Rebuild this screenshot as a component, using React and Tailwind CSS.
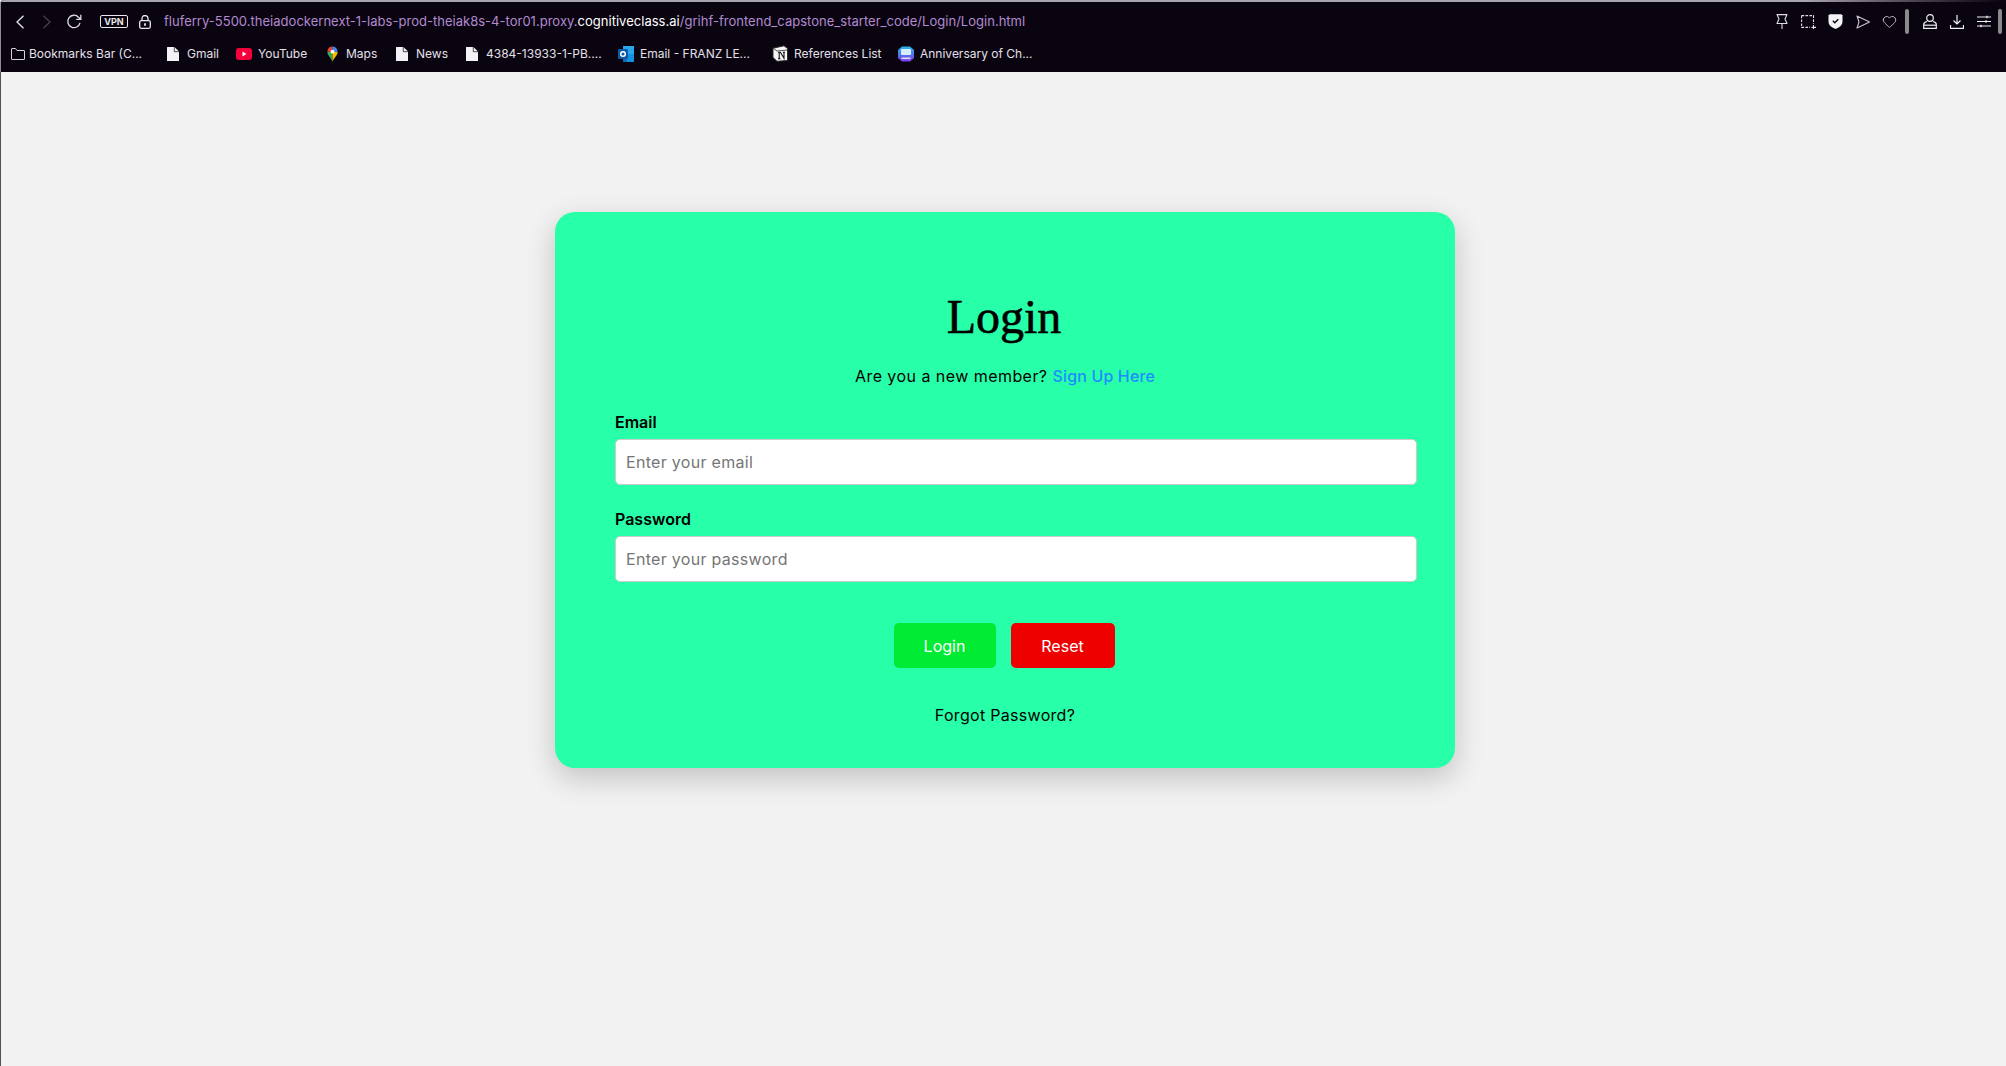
import React from 'react';
import { Heart } from 'lucide-react';

const uiFont = "font-['Inter','Liberation_Sans',sans-serif]";

const PageIcon = () => (
    <svg width="12" height="14" viewBox="0 0 12 14">
        <path d="M0 .5A.5.5 0 0 1 .5 0H7.500L12 4.500V13.500A.5.5 0 0 1 11.500 14H.5A.5.5 0 0 1 0 13.500z" fill="#f4f2f6" />
        <path d="M7.300 0V4.700H12" fill="none" stroke="#0a0410" strokeWidth=".7" />
    </svg>
);

const FolderIcon = () => (
    <svg width="14" height="12" viewBox="0 0 14 12" fill="none" stroke="#d8d4dc" strokeWidth="1">
        <path d="M.5 1a.5.5 0 0 1 .5-.5h3.500l1.500 2h7a.5.5 0 0 1 .5.5v8a.5.5 0 0 1-.5.5H1a.5.5 0 0 1-.5-.5z" />
    </svg>
);

const YouTubeIcon = () => (
    <svg width="16" height="12" viewBox="0 0 16 12">
        <rect width="16" height="12" rx="3" fill="#f5003d" />
        <path d="M6.500 3.500L10.500 6L6.500 8.500z" fill="#fff" />
    </svg>
);

const MapsIcon = () => (
    <svg width="11" height="16" viewBox="0 0 14 20">
        <path d="M7 20C5.500 15 .5 12 .5 7L7 7z" fill="#34a853" />
        <path d="M7 20C8.500 15 13.500 12 13.500 7L7 7z" fill="#fbbc04" />
        <path d="M2.500 2.200A6.500 6.500 0 0 1 7 .5L7 7L.5 7A6.500 6.500 0 0 1 2.500 2.200z" fill="#ea4335" />
        <path d="M7 .5A6.500 6.500 0 0 1 13.500 7L7 7z" fill="#4285f4" />
        <circle cx="7" cy="7" r="2.500" fill="#fff" />
    </svg>
);

const OutlookIcon = () => (
    <svg width="16" height="16" viewBox="0 0 16 16">
        <rect x="5" y="0" width="11" height="8" fill="#28a8ea" />
        <path d="M5 8h11v7a1 1 0 0 1-1 1H5z" fill="#0f6cbd" />
        <path d="M9 8h7v8H9z" fill="#1490df" />
        <rect x="0" y="3" width="10" height="10" rx="1" fill="#0a5ca8" />
        <circle cx="5" cy="8" r="2.300" fill="none" stroke="#fff" strokeWidth="1.500" />
    </svg>
);

const NotionIcon = () => (
    <svg width="17" height="17" viewBox="0 0 17 17">
        <path d="M1 3.200L12 .8l3.500 2.700v12L5 16.300 1 12.500z" fill="#f6f6f6" stroke="#2a2a2a" strokeWidth="1" />
        <path d="M1.500 3.500L5 6l10.500-1" fill="none" stroke="#2a2a2a" strokeWidth=".8" />
        <path d="M6 7.200H8.300L12 13V7.200M10.800 7.200H13M7.200 7.500V13.800M6 13.800H8.500M12 13V14.300" fill="none" stroke="#111" strokeWidth="1.100" />
    </svg>
);

const AnniversaryIcon = () => (
    <svg width="16" height="16" viewBox="0 0 16 16">
        <defs>
            <linearGradient id="anniv" x1="0" y1="0" x2="0" y2="1">
                <stop offset="0" stopColor="#22b8e8" />
                <stop offset="1" stopColor="#7c3aed" />
            </linearGradient>
        </defs>
        <path d="M4 .5h8l4 3.500v8l-4 3.500H4L0 12V4z" fill="url(#anniv)" />
        <rect x="3" y="3" width="10" height="6" rx="1" fill="#d7ecff" />
        <rect x="3.500" y="11.500" width="9" height="1.600" fill="#e9d5ff" />
    </svg>
);

const Chevron = ({ flip, color }) => (
    <svg width="8" height="14" viewBox="0 0 8 14" fill="none" stroke={color} strokeWidth="1.300" className={flip ? 'rotate-180' : ''}>
        <path d="M7.500 .7L1 7l6.500 6.300" />
    </svg>
);

const Reload = () => (
    <svg width="16" height="16" viewBox="0 0 16 16" fill="none" stroke="#dedbe2" strokeWidth="1.300">
        <path d="M14 8.800A6.200 6.200 0 1 1 12.500 3.200L14.500 5" />
        <path d="M14.800 .8V5.300H10.300" />
    </svg>
);

const LockIcon = () => (
    <svg width="12" height="14" viewBox="0 0 12 14" fill="none" stroke="#ece9ef" strokeWidth="1.300">
        <path d="M3 6V3.500a3 3 0 0 1 6 0V6" />
        <rect x=".7" y="5.700" width="10.600" height="7.600" rx="1.500" />
        <path d="M6 8.300v2.400" strokeWidth="1.800" />
    </svg>
);

const VpnBadge = () => (
    <span className="flex h-[13px] w-[28px] items-center justify-center rounded-[2px] border border-[#e8e6ea] text-[9px] font-bold leading-none text-[#e8e6ea]">
        VPN
    </span>
);

const PinIcon = () => (
    <svg width="12" height="15" viewBox="0 0 12 15" fill="none" stroke="#dedbe2" strokeWidth="1.100">
        <path d="M1 .6h10L9 5l2 4.500H1L3 5z" strokeLinejoin="round" />
        <path d="M6 9.500V15" />
    </svg>
);

const Snapshot = () => (
    <svg width="15" height="14" viewBox="0 0 15 14" fill="none" stroke="#e2e0e5" strokeWidth="1.100">
        <path d="M.6 .6H12.500V9M.6 .6V12.400H9" strokeDasharray="2.600 1.300" />
        <path d="M12.500 10V14M10.500 12.400H15" />
    </svg>
);

const Shield = () => (
    <svg width="15" height="15" viewBox="0 0 15 15">
        <path d="M.5 1.500A2 2 0 0 1 2 .2H13A2 2 0 0 1 14.500 1.500V7.500Q14.500 12.500 7.500 15Q.5 12.500 .5 7.500z" fill="#f4f3f5" />
        <path d="M4.800 6.800L6.800 8.700L10.300 5.300" fill="none" stroke="#0a0410" strokeWidth="1.400" />
    </svg>
);

const SendIcon = () => (
    <svg width="14" height="14" viewBox="0 0 14 14" fill="none" stroke="#c9c5ce" strokeWidth="1.100">
        <path d="M1 1L13.500 7L1 13L3 7z" strokeLinejoin="round" />
    </svg>
);

const UserIcon = () => (
    <svg width="14" height="15" viewBox="0 0 14 15" fill="none" stroke="#f0eef2" strokeWidth="1.200">
        <circle cx="7" cy="4" r="3.300" />
        <path d="M4 7.500Q.7 8.300 .7 10.500V14.300H13.300V10.500Q13.300 8.300 10 7.500" />
        <path d="M.7 11.200H13.300" />
    </svg>
);

const DownloadIcon = () => (
    <svg width="14" height="14" viewBox="0 0 14 14" fill="none" stroke="#f0eef2" strokeWidth="1.200">
        <path d="M7 0V9M3.500 5.500L7 9L10.500 5.500" />
        <path d="M.5 10V13.300H13.500V10" />
    </svg>
);

const Sliders = () => (
    <svg width="14" height="13" viewBox="0 0 14 13" fill="none" stroke="#f0eef2" strokeWidth="1">
        <path d="M0 2H14M0 6.500H14M0 11H14" />
        <path d="M10 .8V3.200M9 5.300V7.700M4 9.800V12.200" strokeWidth="1.300" />
    </svg>
);

const bookmarks = [
    { label: 'Bookmarks Bar (C...', icon: <FolderIcon />, cls: 'w-[156px] gap-[4px]' },
    { label: 'Gmail', icon: <PageIcon />, cls: 'w-[69px] gap-[8px]' },
    { label: 'YouTube', icon: <YouTubeIcon />, cls: 'w-[91px] gap-[6px]' },
    { label: 'Maps', icon: <MapsIcon />, cls: 'w-[69px] gap-[8px]' },
    { label: 'News', icon: <PageIcon />, cls: 'w-[70px] gap-[8px]' },
    { label: '4384-13933-1-PB....', icon: <PageIcon />, cls: 'w-[152px] gap-[8px]' },
    { label: 'Email - FRANZ LE...', icon: <OutlookIcon />, cls: 'w-[154px] gap-[6px]' },
    { label: 'References List', icon: <NotionIcon />, cls: 'w-[126px] gap-[5px]' },
    { label: 'Anniversary of Ch...', icon: <AnniversaryIcon />, cls: 'gap-[6px]' },
];

const toolbarLeft = [
    <PinIcon key="pin" />,
    <Snapshot key="snapshot" />,
    <Shield key="shield" />,
    <SendIcon key="send" />,
    <Heart key="heart" size={15} strokeWidth={1.3} className="text-[#dedbe2]" />,
];

const toolbarRight = [
    <UserIcon key="user" />,
    <DownloadIcon key="download" />,
    <Sliders key="sliders" />,
];

const ToolbarCell = ({ children }) => (
    <div className="flex w-[27px] items-center justify-center">{children}</div>
);

const BrowserChrome = () => (
    <div className={`h-[72px] shrink-0 overflow-hidden rounded-tl-[4px] border-l border-l-[#8f8a96] bg-[#0a0410] ${uiFont}`}>
        <div className="h-[2px] bg-linear-to-r from-[#a8a4ae] via-[#a8a4ae] via-90% to-[#0a0410]" />
        <div className="flex h-[39px] items-center pl-[15px]">
            <Chevron color="#e8e6ea" />
            <div className="ml-[19px] flex"><Chevron flip color="#45404c" /></div>
            <div className="ml-[15px]"><Reload /></div>
            <div className="ml-[18px]"><VpnBadge /></div>
            <div className="ml-[11px]"><LockIcon /></div>
            <div className="ml-[13px] whitespace-nowrap text-[13px] tracking-[0.02px] text-[#b18ad0]">
                fluferry-5500.theiadockernext-1-labs-prod-theiak8s-4-tor01.proxy.<span className="text-white">cognitiveclass.ai</span>/grihf-frontend_capstone_starter_code/Login/Login.html
            </div>
            <div className="ml-auto flex items-center pr-[4px]">
                {toolbarLeft.map((icon) => <ToolbarCell key={icon.key}>{icon}</ToolbarCell>)}
                <div className="ml-[2px] h-[25px] w-[4px] rounded-sm bg-[#8a8a8a]" />
                <div className="ml-[7px] flex">
                    {toolbarRight.map((icon) => <ToolbarCell key={icon.key}>{icon}</ToolbarCell>)}
                </div>
                <div className="ml-[1px] h-[25px] w-[4px] rounded-sm bg-[#8a8a8a]" />
            </div>
        </div>
        <div className="flex h-[25px] items-center pl-[10px] text-[12px] text-[#e4e0e9]">
            {bookmarks.map((b) => (
                <span key={b.label} className={`flex shrink-0 items-center whitespace-nowrap ${b.cls}`}>
                    {b.icon}
                    {b.label}
                </span>
            ))}
        </div>
    </div>
);

const Field = ({ label, placeholder, type, className }) => (
    <div className={className}>
        <label className="mb-[5px] block text-[16px] font-semibold leading-[24px] text-black">{label}</label>
        <input
            type={type}
            placeholder={placeholder}
            className="box-content w-full rounded-[5px] border border-[#ccc] bg-white p-[10px] text-[16px] leading-[24px] tracking-[0.3px] text-black placeholder:text-[#757575]"
        />
    </div>
);

const App = () => {
    return (
        <div className="flex min-h-[1066px] flex-col bg-[#f2f2f2]">
            <BrowserChrome />
            <div className="flex flex-1 justify-center border-l border-l-[#55505c] pl-[3px] pt-[140px]">
                <div className={`h-[556px] w-[900px] rounded-[20px] bg-[#28ffa9] px-[60px] pt-[71px] shadow-[0_10px_30px_rgba(0,0,0,0.2)] ${uiFont}`}>
                    <h1 className="pr-[2px] text-center font-['Liberation_Serif',serif] text-[48px] font-normal leading-[68px] text-black [-webkit-text-stroke:0.6px_black]">Login</h1>
                    <p className="mt-[13px] text-center text-[16px] leading-[24px] tracking-[0.45px] text-black">
                        Are you a new member? <a className="font-medium tracking-[0.15px] text-[#1e8cff]">Sign Up Here</a>
                    </p>
                    <Field className="mt-[22px]" label="Email" type="email" placeholder="Enter your email" />
                    <Field className="mt-[22px]" label="Password" type="password" placeholder="Enter your password" />
                    <div className="mt-[41px] flex justify-center gap-[15px] pr-[2px]">
                        <button className="h-[45px] w-[102px] rounded-[5px] bg-[#00eb33] text-[16px] text-white">Login</button>
                        <button className="h-[45px] w-[104px] rounded-[5px] bg-[#ee0000] text-[16px] text-white">Reset</button>
                    </div>
                    <p className="mt-[35px] text-center text-[16px] leading-[24px] tracking-[0.3px] text-black">Forgot Password?</p>
                </div>
            </div>
        </div>
    );
};

export default App;
